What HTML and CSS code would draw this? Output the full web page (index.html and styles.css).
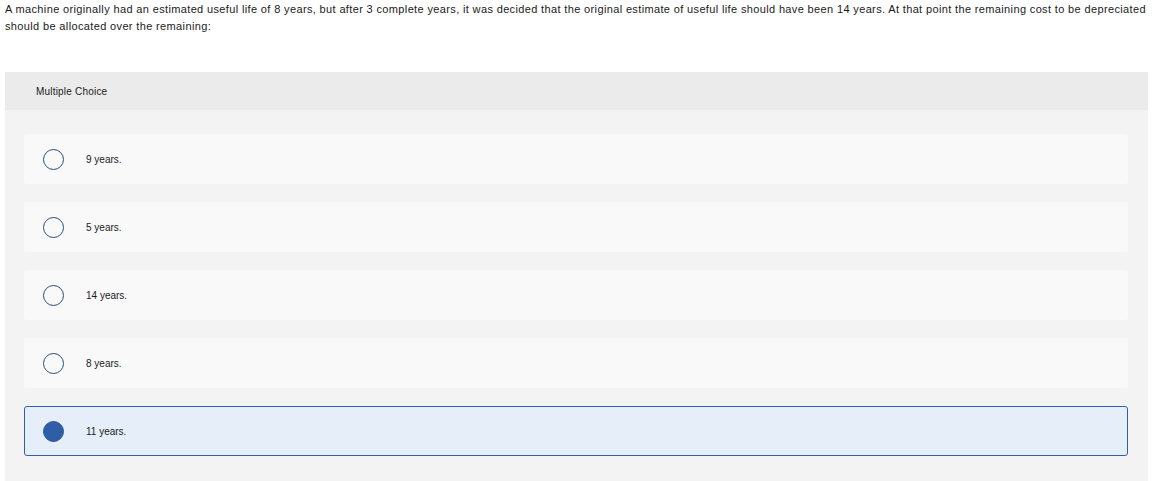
FILE: index.html
```html
<!DOCTYPE html>
<html>
<head>
<meta charset="utf-8">
<link rel="stylesheet" href="styles.css">
</head>
<body>
<p class="question">A machine originally had an estimated useful life of 8 years, but after 3 complete years, it was decided that the original estimate of useful life should have been 14 years. At that point the remaining cost to be depreciated should be allocated over the remaining:</p>
<div class="panel">
  <div class="panel-head">Multiple Choice</div>
  <div class="panel-body">
    <div class="option"><span class="radio"></span><span class="label">9 years.</span></div>
    <div class="option"><span class="radio"></span><span class="label">5 years.</span></div>
    <div class="option"><span class="radio"></span><span class="label">14 years.</span></div>
    <div class="option"><span class="radio"></span><span class="label">8 years.</span></div>
    <div class="option selected"><span class="radio"></span><span class="label">11 years.</span></div>
  </div>
</div>
</body>
</html>
```
FILE: styles.css
```css
html, body { margin: 0; padding: 0; background: #fff; }
body {
  padding: 0 14px 0 5px;
  font-family: "Liberation Sans", Arial, sans-serif;
  color: #1a1a1a;
}
.question {
  margin: 0;
  padding-top: 1px;
  font-size: 11px;
  letter-spacing: 0.36px;
  line-height: 17px;
  width: 1150px;
}
.panel {
  margin-top: 37px;
  background: #f3f3f3;
  width: 1143px;
}
.panel-head {
  background: #ebebeb;
  height: 38px;
  display: flex;
  align-items: center;
  padding-left: 31px;
  font-size: 10px;
  letter-spacing: 0.2px;
  color: #1a1a1a;
}
.panel-body {
  padding: 24px 20px 30px 19px;
  display: flex;
  flex-direction: column;
  gap: 18px;
}
.option {
  height: 50px;
  box-sizing: border-box;
  background: #f9f9f9;
  border-radius: 3px;
  display: flex;
  align-items: center;
  padding-left: 19px;
  font-size: 10px;
}
.radio {
  width: 19px;
  height: 19px;
  border: 1.5px solid #2b4c78;
  border-radius: 50%;
  box-sizing: content-box;
  flex: none;
}
.label { margin-left: 22px; }
.option.selected {
  background: #e6eff9;
  border: 1px solid #2e61ac;
  padding-left: 18px;
}
.option.selected .radio {
  background: #2e5ea8;
  border-color: #2a569a;
}
```
